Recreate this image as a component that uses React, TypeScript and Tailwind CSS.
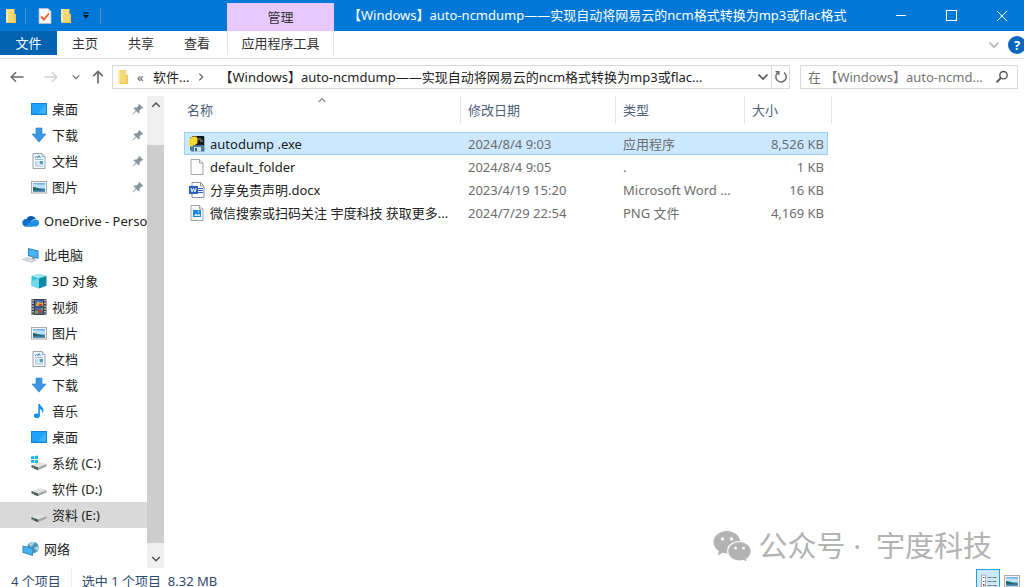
import type { ReactNode } from 'react'

type NavItem = {
  label: string
  icon: ReactNode
  root?: boolean
  pinned?: boolean
  active?: boolean
}

type FileRow = {
  name: string
  date: string
  type: string
  size: string
  icon: ReactNode
  selected?: boolean
}

function Folder() {
  return (
    <svg viewBox="0 0 12 16" className="w-3 h-4 shrink-0" aria-hidden="true">
      <path d="M1 1h8.500v5H11v8.500H1z" fill="#f6d978" />
      <path d="M1 1h2v14l-2-1z" fill="#ffe9a3" />
      <path d="M3 13.500h8V15H3z" fill="#f3c95a" />
      <path d="M9 6h2v7.500H9z" fill="#efc75c" />
    </svg>
  )
}

function Desktop() {
  return (
    <svg viewBox="0 0 16 16" className="size-4" aria-hidden="true">
      <rect x="0" y="2" width="16" height="12" fill="#1583d8" />
      <rect x="1" y="3" width="14" height="9.500" fill="#1ca2fb" />
      <path d="M15 3v9.500H7z" fill="#3db2ff" />
    </svg>
  )
}

function Download() {
  return (
    <svg viewBox="0 0 16 16" className="size-4" aria-hidden="true">
      <path d="M5 1h6v6h4l-7 8.200L1 7h4z" fill="#3d95e6" stroke="#2b7fd0" strokeWidth=".6" />
    </svg>
  )
}

function Doc() {
  return (
    <svg viewBox="0 0 16 16" className="size-4" aria-hidden="true">
      <path d="M2 .5h9l3 3v12H2z" fill="#f4f7f9" stroke="#8f989e" strokeWidth=".9" />
      <path d="M11 .5v3h3" fill="#d8dde0" stroke="#8f989e" strokeWidth=".7" />
      <path d="M4 6.500h8M4 9h3M9 9h3M4 11h3M9 11h3M4 13h8" stroke="#8bb3cc" strokeWidth=".9" />
      <path d="M4 5l1.500-2L7 5l1-2.500L9.500 5" fill="none" stroke="#3a92c9" />
      <path d="M8.500 8h3.500v3H8.500z" fill="#4f9fcb" />
    </svg>
  )
}

function Picture() {
  return (
    <svg viewBox="0 0 16 16" className="size-4" aria-hidden="true">
      <rect x=".5" y="2.500" width="15" height="11.500" fill="#f6f6f6" stroke="#a9a9a9" />
      <rect x="2" y="4" width="12" height="8.500" fill="#6fb4ee" />
      <path d="M2 5.500c4-1 8 1 12 0V9H2z" fill="#bfe0fa" />
      <path d="M2 8c3 0 5 1.500 8 2l4 .5v2H2z" fill="#2a6468" />
      <path d="M2 11.200h12v1.300H2z" fill="#3e82ba" />
    </svg>
  )
}

function OneDrive() {
  return (
    <svg viewBox="0 0 18 12" className="w-[18px] h-3" aria-hidden="true">
      <path d="M4.500 4.200A5 5 0 0 1 13.800 4c-3 0-5 2-8 5z" fill="#0a5cb0" />
      <path d="M4 11.500A3.800 3.800 0 1 1 6.300 4.600L13 9l-3 2.500z" fill="#0f70c8" />
      <path d="M3 11.200L11.200 5A4.300 4.300 0 0 1 14 4.500a3.600 3.600 0 0 1 .4 7H4z" fill="#1e90e6" />
    </svg>
  )
}

function Computer() {
  return (
    <svg viewBox="0 0 18 16" className="w-[18px] h-4" aria-hidden="true">
      <path d="M6 1l10.500 2.500v8.500L6 9z" fill="#2b7fbd" />
      <path d="M7 2.200l8.500 2v6.500L7 8.300z" fill="#46b4f5" />
      <path d="M10 9.500l3 1v2.500l-3-1z" fill="#8b9aa5" />
      <path d="M.5 12.500l5-2 9 2.700-5 2.300z" fill="#d5dadd" stroke="#a8b0b5" strokeWidth=".5" />
    </svg>
  )
}

function Cube() {
  return (
    <svg viewBox="0 0 16 16" className="size-4" aria-hidden="true">
      <path d="M8 .5l7.500 2.200L8 5.200.5 2.700z" fill="#a1e8f3" />
      <path d="M.5 2.700L8 5.200v10.300L.5 12.700z" fill="#35c1d8" />
      <path d="M15.500 2.700L8 5.200v10.300l7.500-2.800z" fill="#0c8ba8" />
      <path d="M.5 8L8 5.200v10.300L.5 12.700z" fill="#6fd8e8" />
    </svg>
  )
}

function Film() {
  return (
    <svg viewBox="0 0 16 16" className="size-4" aria-hidden="true">
      <path d="M.5 0h15v16H.5z" fill="#41434b" />
      <path d="M2 .8v15M14 .8v15" stroke="#d9d9d9" strokeWidth="1.400" strokeDasharray="1.500 1.300" />
      <path d="M4 1h8v6.500H4zM4 8.500h8V15H4z" fill="#3b69bd" />
      <path d="M5 5l2-3 2 2 3-1v4H5z" fill="#e0a23d" />
      <path d="M8 5h3v2H8zM5 12l3-2 3 2v2H5z" fill="#c33f35" />
      <path d="M4 12h3v3H4zM10 9h2v2h-2z" fill="#5fa64f" />
    </svg>
  )
}

function Music() {
  return (
    <svg viewBox="0 0 16 16" className="size-4" aria-hidden="true">
      <ellipse cx="5.800" cy="12.700" rx="3" ry="2.300" fill="#1691ea" />
      <path d="M7.300 1h1.600c.3 2.500 3.600 3 3.600 6 0 1.300-.5 2.400-1.300 3.300.4-2.600-.5-3.700-2.300-4.300v6.700H7.300z" fill="#1691ea" />
    </svg>
  )
}

function Drive({ system }: { system?: boolean }) {
  return (
    <svg viewBox="0 0 16 16" className="size-4" aria-hidden="true">
      {system && <path d="M0 1.500l3-.4v3H0zM3.700 1L7 .5v3.600H3.700zM0 4.900h3v3l-3-.4zM3.700 4.900H7v3.600L3.700 8z" fill="#13b5ea" />}
      <path d="M.5 10l8-3 7 2-8.500 3.500z" fill="#dfe1e2" />
      <path d="M.5 10L7 12.500v2.700L.5 12.500z" fill="#4c5052" />
      <path d="M7 12.500L15.500 9v2.500L7 15.200z" fill="#a3a7a9" />
      <path d="M1.500 12l1.500.6" stroke="#62d254" strokeWidth="1" />
    </svg>
  )
}

function Network() {
  return (
    <svg viewBox="0 0 18 16" className="w-[18px] h-4" aria-hidden="true">
      <circle cx="11" cy="6.500" r="5.800" fill="#4b93bb" />
      <path d="M7 3c2-2 4-2.300 6-1.500L11 4 9 6zM12 7l4-2c.8 2 .4 3.500-1 5z" fill="#a9d4e4" />
      <path d="M.5 4.500L11 7v8L.5 11.700z" fill="#2c83c4" />
      <path d="M1.300 5.600l8.900 2.100v6.100l-8.900-2.700z" fill="#45b0f2" />
    </svg>
  )
}

function Pin() {
  return (
    <svg viewBox="0 0 12 12" className="size-3" aria-hidden="true">
      <path d="M7 .8L11.300 5l-1.200.6-.6-.2-2 2 .2 2.300-.9.900L4.400 8.200 1 11.400l-.4-.4L3.800 7.600 1.500 5.300l.9-.9 2.300.2 2-2-.2-.7z" fill="#8595a0" />
    </svg>
  )
}

function PythonExe() {
  return (
    <svg viewBox="0 0 16 16" className="size-4" aria-hidden="true">
      <path d="M1 1h14.500v14.500H2.500L1 14z" fill="#47799b" />
      <path d="M3 0h12v9H3z" fill="#171717" />
      <path d="M9 2h3v1.500h2V6h-3V4.500H9z" fill="#5d6258" />
      <path d="M1 2.500L3 .5h4L8.500 2v5L6 9H4v1.500H1.500L0 8.500v-4h1z" fill="#f9d72f" />
      <path d="M5 11h7v4.500H5z" fill="#d6e0e6" />
      <path d="M6 12h2v3H6z" fill="#345d7b" />
    </svg>
  )
}

function BlankFile() {
  return (
    <svg viewBox="0 0 16 16" className="size-4" aria-hidden="true">
      <path d="M2 .5h8.500L14 4v11.500H2z" fill="#fcfcfc" stroke="#999" strokeWidth=".9" />
      <path d="M10.500 .5V4H14" fill="#eee" stroke="#999" strokeWidth=".9" />
    </svg>
  )
}

function WordFile() {
  return (
    <svg viewBox="0 0 16 16" className="size-4" aria-hidden="true">
      <path d="M3 .5h8.500L15 4v11.500H3z" fill="#fff" stroke="#7c8794" strokeWidth=".9" />
      <path d="M11.500 .5V4H15" fill="none" stroke="#7c8794" strokeWidth=".9" />
      <path d="M9 6.500h5M9 8.500h5M9 10.500h5" stroke="#2b63bd" />
      <rect y="4" width="9" height="8" fill="#2560bf" />
      <path d="M1.800 6l1.300 4L4.500 6.500 5.900 10l1.300-4" fill="none" stroke="#fff" />
    </svg>
  )
}

function PngFile() {
  return (
    <svg viewBox="0 0 16 16" className="size-4" aria-hidden="true">
      <path d="M2 .5h8.500L14 4v11.500H2z" fill="#fcfcfc" stroke="#999" strokeWidth=".9" />
      <path d="M10.500 .5V4H14" fill="#eee" stroke="#999" strokeWidth=".9" />
      <rect x="4" y="5" width="8" height="7" fill="#1585dd" />
      <path d="M5 11l2-2.500L8.500 10 10 8.500l1.500 2.500z" fill="#d6edfc" />
      <circle cx="9.500" cy="6.800" r=".7" fill="#fff" />
    </svg>
  )
}

type ChevronProps = { className?: string; d?: string }

function Chevron({ className = '', d = 'M1.500 3.500L6 8l4.500-4.500' }: ChevronProps) {
  return (
    <svg viewBox="0 0 12 12" className={`shrink-0 ${className}`} fill="none" stroke="currentColor" strokeWidth="1.700" aria-hidden="true">
      <path d={d} />
    </svg>
  )
}

const UP = 'M1.500 8L6 3.500 10.500 8'

const quickAccess: NavItem[] = [
  { label: '桌面', icon: <Desktop />, pinned: true },
  { label: '下载', icon: <Download />, pinned: true },
  { label: '文档', icon: <Doc />, pinned: true },
  { label: '图片', icon: <Picture />, pinned: true },
]

const thisPc: NavItem[] = [
  { label: '此电脑', icon: <Computer />, root: true },
  { label: '3D 对象', icon: <Cube /> },
  { label: '视频', icon: <Film /> },
  { label: '图片', icon: <Picture /> },
  { label: '文档', icon: <Doc /> },
  { label: '下载', icon: <Download /> },
  { label: '音乐', icon: <Music /> },
  { label: '桌面', icon: <Desktop /> },
  { label: '系统 (C:)', icon: <Drive system /> },
  { label: '软件 (D:)', icon: <Drive /> },
  { label: '资料 (E:)', icon: <Drive />, active: true },
]

const navGroups: NavItem[][] = [
  quickAccess,
  [{ label: 'OneDrive - Personal', icon: <OneDrive />, root: true }],
  thisPc,
  [{ label: '网络', icon: <Network />, root: true }],
]

const files: FileRow[] = [
  { name: 'autodump .exe', date: '2024/8/4 9:03', type: '应用程序', size: '8,526 KB', icon: <PythonExe />, selected: true },
  { name: 'default_folder', date: '2024/8/4 9:05', type: '.', size: '1 KB', icon: <BlankFile /> },
  { name: '分享免责声明.docx', date: '2023/4/19 15:20', type: 'Microsoft Word ...', size: '16 KB', icon: <WordFile /> },
  { name: '微信搜索或扫码关注 宇度科技 获取更多...', date: '2024/7/29 22:54', type: 'PNG 文件', size: '4,169 KB', icon: <PngFile /> },
]

function TitleBar() {
  return (
    <header className="flex h-[31px] shrink-0 bg-[#0078d7] text-white">
      <div className="flex w-[227px] shrink-0 items-center pl-[5px]">
        <Folder />
        <span className="ml-2 h-4 w-px bg-[#4d8fc4]" />
        <button aria-label="属性" className="ml-3">
          <svg viewBox="0 0 14 16" className="h-4 w-[14px]" aria-hidden="true">
            <path d="M1 .5h9l3 3v12H1z" fill="#f8f8f8" stroke="#b7bdc4" strokeWidth=".8" />
            <path d="M10 .5v3h3" fill="#ddd" />
            <path d="M3 8.500l2.800 3L11 5.500" fill="none" stroke="#e8642c" strokeWidth="1.900" />
          </svg>
        </button>
        <button aria-label="新建文件夹" className="ml-2">
          <Folder />
        </button>
        <button aria-label="自定义快速访问工具栏" className="ml-[10px]">
          <svg viewBox="0 0 8 8" className="size-2" aria-hidden="true">
            <path d="M1 1h6" stroke="#111" />
            <path d="M1 3h6L4 6.500z" fill="#111" />
          </svg>
        </button>
        <span className="ml-[10px] h-4 w-px bg-[#4d8fc4]" />
      </div>
      <div className="mt-[3px] flex w-[107px] shrink-0 items-center justify-center bg-[#e8c8ff] text-[#333]">管理</div>
      <h1 className="min-w-0 flex-1 truncate pl-[14px] leading-[30px]">【Windows】auto-ncmdump——实现自动将网易云的ncm格式转换为mp3或flac格式</h1>
      <div className="flex shrink-0">
        <button aria-label="最小化" className="flex w-[50px] items-center justify-center">
          <span className="h-px w-[10px] bg-white" />
        </button>
        <button aria-label="最大化" className="flex w-[50px] items-center justify-center">
          <span className="size-[11px] border border-white" />
        </button>
        <button aria-label="关闭" className="flex w-12 items-center justify-center pl-1">
          <svg viewBox="0 0 12 12" className="size-3" stroke="#fff" aria-hidden="true">
            <path d="M1 1l10 10M11 1L1 11" />
          </svg>
        </button>
      </div>
    </header>
  )
}

function Ribbon() {
  return (
    <nav className="flex h-7 shrink-0 border-b border-[#dfdfdf] text-[#333]">
      <button className="h-6 w-[57px] bg-[#0063b1] text-white">文件</button>
      <button className="h-6 w-14">主页</button>
      <button className="h-6 w-14">共享</button>
      <button className="h-6 w-14">查看</button>
      <button className="ml-[2px] h-6 w-[107px] border-x border-[#e4e4e4]">应用程序工具</button>
      <div className="ml-auto flex items-center text-[#b5b5b5]">
        <button aria-label="展开功能区">
          <Chevron className="size-3" />
        </button>
        <button aria-label="帮助" className="-mr-[2px] ml-2 flex size-[18px] items-center justify-center rounded-full bg-[#0a66bf] text-[13px] font-bold text-white">
          ?
        </button>
      </div>
    </nav>
  )
}

function AddressRow() {
  return (
    <div className="flex h-9 shrink-0 items-center pr-[6px] text-[#6a6a6a]">
      <div className="flex w-28 shrink-0 items-center pl-[10px]">
        <button aria-label="后退">
          <svg viewBox="0 0 14 12" className="h-3 w-[14px]" fill="none" stroke="currentColor" strokeWidth="1.500" aria-hidden="true">
            <path d="M13.500 6H1.200M6 1.200L1.200 6 6 10.800" />
          </svg>
        </button>
        <button aria-label="前进" className="ml-5 text-[#d0d0d0]">
          <svg viewBox="0 0 14 12" className="h-3 w-[14px]" fill="none" stroke="currentColor" strokeWidth="1.500" aria-hidden="true">
            <path d="M.5 6h12.300M8 1.200L12.800 6 8 10.800" />
          </svg>
        </button>
        <button aria-label="最近浏览的位置" className="ml-[14px]">
          <Chevron className="size-2" d="M1 3.500l5 5 5-5" />
        </button>
        <button aria-label="上移" className="ml-3">
          <svg viewBox="0 0 12 14" className="h-[14px] w-3" fill="none" stroke="currentColor" strokeWidth="1.700" aria-hidden="true">
            <path d="M6 13.500V1.500M1.200 6.200L6 1.400l4.800 4.800" />
          </svg>
        </button>
      </div>
      <div className="flex h-6 min-w-0 flex-1 items-center border border-[#d9d9d9] pl-1 text-[#222]">
        <Folder />
        <span className="ml-2 w-4 text-[#555]">«</span>
        <button className="shrink-0">软件...</button>
        <Chevron className="ml-2 size-2 text-[#555]" d="M3.500 1l5 5-5 5" />
        <button className="ml-[14px] min-w-0 flex-1 truncate text-left">【Windows】auto-ncmdump——实现自动将网易云的ncm格式转换为mp3或flac...</button>
        <button aria-label="以前的位置" className="mr-[2px]">
          <Chevron className="size-3 text-[#555]" />
        </button>
        <button aria-label="刷新" className="flex h-full w-[18px] items-center justify-center border-l border-[#d9d9d9]">
          <svg viewBox="0 0 14 14" className="size-[14px]" fill="none" stroke="#6a6a6a" strokeWidth="1.500" aria-hidden="true">
            <path d="M10 2.500A5.200 5.200 0 1 1 4.200 2.400" />
            <path d="M1.500 1.700h3.300V5" />
          </svg>
        </button>
      </div>
      <div className="ml-[10px] flex h-6 w-[218px] shrink-0 items-center border border-[#d9d9d9] pr-2 pl-[7px]">
        <input
          type="search"
          aria-label="搜索"
          placeholder="在 【Windows】auto-ncmd..."
          className="min-w-0 flex-1 outline-none placeholder:text-[#757575]"
        />
        <svg viewBox="0 0 14 14" className="size-[14px] shrink-0" fill="none" stroke="#555" aria-hidden="true">
          <circle cx="8.500" cy="5.200" r="3.700" strokeWidth="1.400" />
          <path d="M5.800 8L1.500 12.300" strokeWidth="1.900" />
        </svg>
      </div>
    </div>
  )
}

function Sidebar() {
  return (
    <aside className="flex w-[164px] shrink-0">
      <div className="flex min-w-0 flex-1 flex-col gap-2 overflow-hidden">
        {navGroups.map((group, i) => (
          <ul key={i}>
            {group.map((item) => (
              <li key={item.label}>
                <a
                  href="#"
                  className={`flex h-[26px] items-center whitespace-nowrap text-[#222] ${item.root ? 'gap-1 pl-[22px]' : 'gap-[5px] pl-[31px]'} ${item.active ? 'bg-[#d9d9d9]' : ''}`}
                >
                  <span className="shrink-0">{item.icon}</span>
                  <span>{item.label}</span>
                  {item.pinned && (
                    <span className="mr-[3px] ml-auto">
                      <Pin />
                    </span>
                  )}
                </a>
              </li>
            ))}
          </ul>
        ))}
      </div>
      {/* Scrollbar */}
      <div className="flex w-[17px] shrink-0 flex-col items-center bg-[#f0f0f0] text-[#505050]">
        <button aria-label="向上滚动" className="flex h-[49px] pt-1">
          <Chevron className="size-[10px]" d={UP} />
        </button>
        <div className="w-full flex-1 bg-[#cdcdcd]" />
        <button aria-label="向下滚动" className="flex h-[25px] items-end pb-1">
          <Chevron className="size-[10px]" />
        </button>
      </div>
    </aside>
  )
}

function FileTable() {
  return (
    <table className="w-[644px] table-fixed border-collapse text-left">
      <colgroup>
        <col />
        <col className="w-[155px]" />
        <col className="w-[129px]" />
        <col className="w-[83px]" />
      </colgroup>
      <thead className="text-[#4c607a]">
        <tr className="h-9 align-top">
          <th className="font-normal">
            <div className="relative h-7 border-r border-[#e5e5e5] pl-[3px] leading-7">
              名称
              <Chevron className="absolute top-0 left-1/2 size-[9px] -translate-x-1/2 text-[#888]" d={UP} />
            </div>
          </th>
          <th className="font-normal">
            <div className="h-7 border-r border-[#e5e5e5] pl-[7px] leading-7">修改日期</div>
          </th>
          <th className="font-normal">
            <div className="h-7 border-r border-[#e5e5e5] pl-[7px] leading-7">类型</div>
          </th>
          <th className="font-normal">
            <div className="-mr-1 h-7 border-r border-[#e5e5e5] pl-[7px] leading-7">大小</div>
          </th>
        </tr>
      </thead>
      <tbody className="text-[#6d6d6d]">
        {files.map((file) => (
          <tr key={file.name} className={`h-[23px] ${file.selected ? 'bg-[#cce8ff] outline-1 -outline-offset-1 outline-[#99d1ff]' : ''}`}>
            <td>
              <div className="flex items-center gap-[5px] pl-[5px] text-[#222]">
                <span className="shrink-0">{file.icon}</span>
                <span className="truncate">{file.name}</span>
              </div>
            </td>
            <td className="truncate pl-[7px]">{file.date}</td>
            <td className="truncate pl-[7px]">{file.type}</td>
            <td className="pr-1 text-right">{file.size}</td>
          </tr>
        ))}
      </tbody>
    </table>
  )
}

function Watermark() {
  return (
    <div className="absolute right-8 bottom-1 flex items-center gap-2 text-[#b3b3b3]">
      <svg viewBox="0 0 38 32" className="h-8 w-[38px]" aria-hidden="true">
        <path d="M14 1C6.300 1 .5 6 .5 12.200c0 3.500 2 6.600 5.200 8.700L4.800 25.500l5-2.700c1.400.4 2.800.6 4.200.6 7.500 0 13.300-5 13.300-11.200S21.500 1 14 1z" fill="currentColor" />
        <path d="M26.500 11.500c-6.600 0-11.800 4.300-11.800 9.700s5.200 9.800 11.800 9.800c1.300 0 2.600-.2 3.800-.5l4.200 2.200-.8-3.800c2.800-1.900 4.600-4.600 4.600-7.700 0-5.400-5.200-9.700-11.800-9.700z" fill="currentColor" stroke="#fff" strokeWidth="1.200" />
        <g fill="#fff">
          <circle cx="9.500" cy="9" r="1.700" />
          <circle cx="18.500" cy="9" r="1.700" />
          <circle cx="22.500" cy="18.200" r="1.400" />
          <circle cx="30.500" cy="18.200" r="1.400" />
        </g>
      </svg>
      <span className="text-[29px] leading-9 font-normal">公众号 ·&nbsp; 宇度科技</span>
    </div>
  )
}

function StatusBar() {
  return (
    <footer className="flex h-[19px] shrink-0 items-start overflow-hidden pr-1 pl-[11px] text-[#2f4a70]">
      <span className="pt-[3px]">4 个项目</span>
      <span className="ml-[10px] h-full border-l border-[#eee] pt-[3px] pl-[10px]">选中 1 个项目&nbsp; 8.32 MB</span>
      <div className="ml-auto flex items-start gap-1 pt-px">
        <button aria-label="详细信息" className="h-6 w-6 border border-[#26a0da] bg-[#cbe8f6] p-1">
          <svg viewBox="0 0 16 16" className="size-4" aria-hidden="true">
            <path d="M.5 1h4v14h-4z" fill="#fff" stroke="#9a9a9a" strokeWidth=".8" />
            <path d="M2 3.500h1.500M2 7.500h1.500" stroke="#555" />
            <path d="M2 11h1.500" stroke="#d03a2b" strokeWidth="2" />
            <path d="M6.500 3.500h4M11.500 3.500h4M6.500 7.500h4M11.500 7.500h4M6.500 11.500h4M11.500 11.500h4" stroke="#777" />
          </svg>
        </button>
        <button aria-label="大缩略图" className="mt-1">
          <Picture />
        </button>
      </div>
    </footer>
  )
}

export default function App() {
  return (
    <div className="flex h-screen flex-col overflow-hidden bg-white font-['Noto_Sans','Noto_Sans_CJK_SC',sans-serif] text-[13px] leading-5">
      <TitleBar />
      <Ribbon />
      <AddressRow />
      <div className="flex min-h-0 flex-1 pt-px">
        <Sidebar />
        <main className="relative min-w-0 flex-1 pl-5">
          <FileTable />
          <Watermark />
        </main>
      </div>
      <StatusBar />
    </div>
  )
}
